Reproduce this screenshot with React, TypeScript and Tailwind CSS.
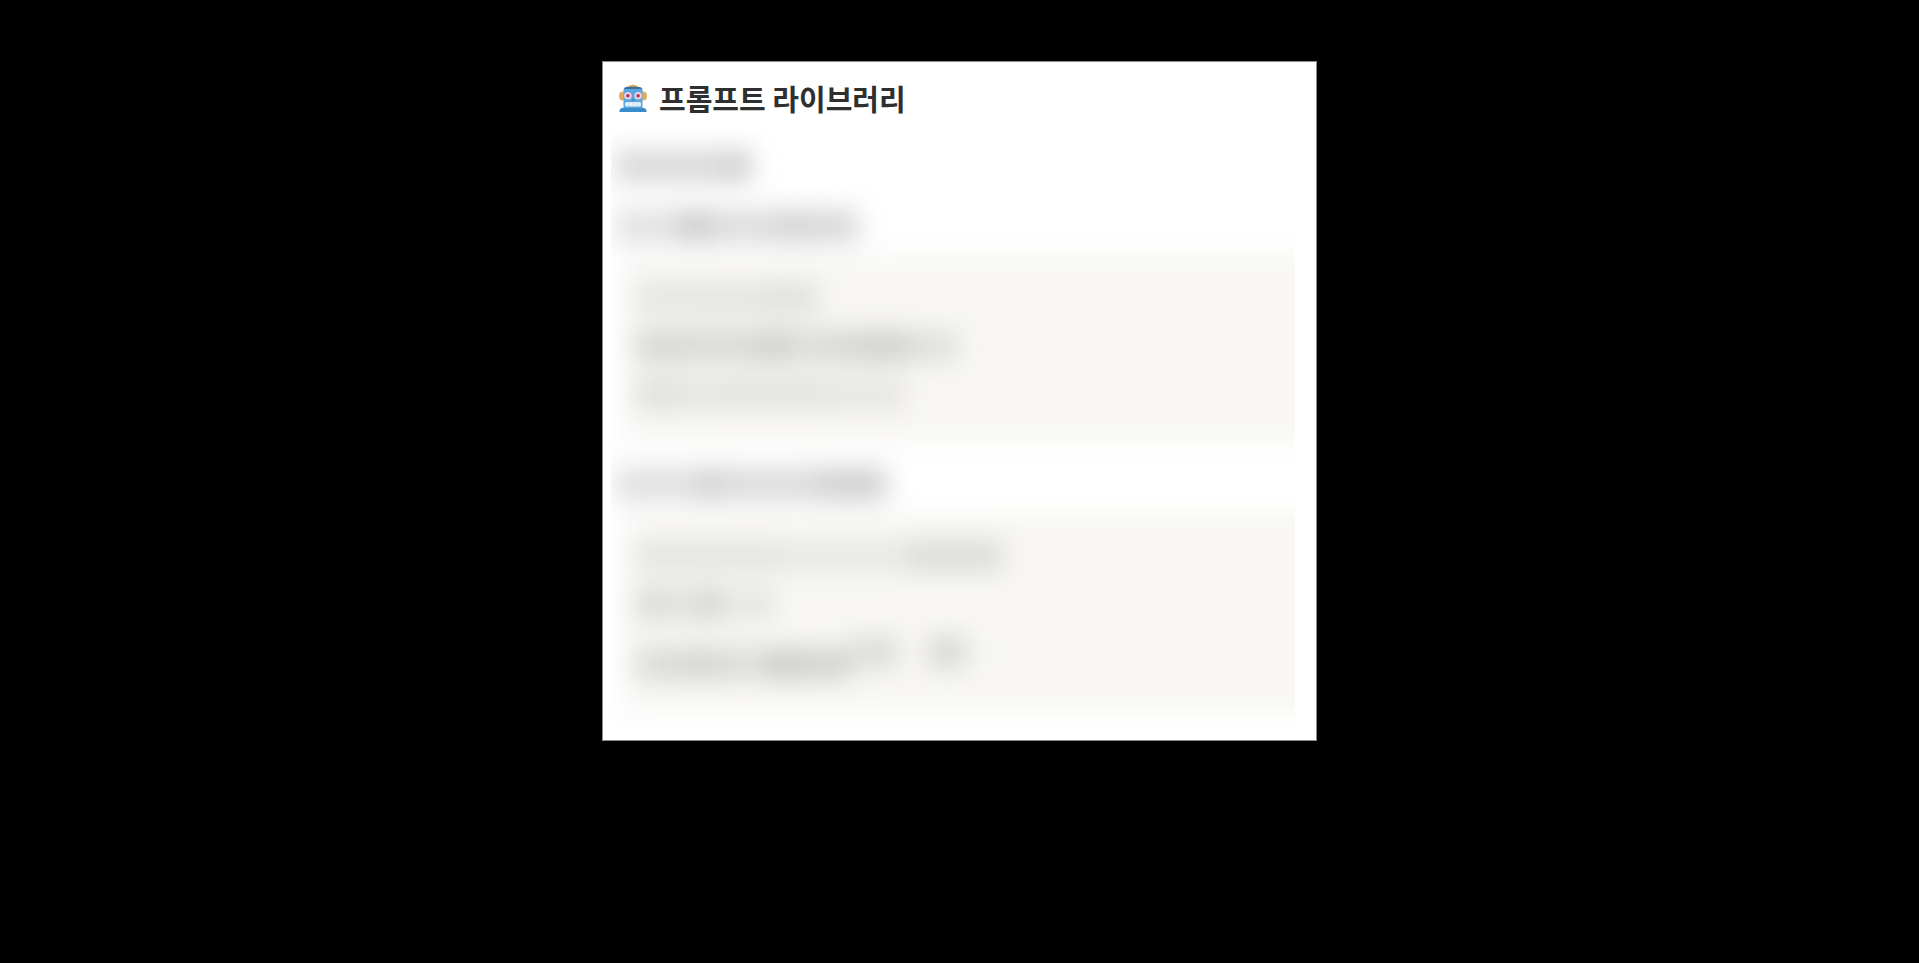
import clsx from 'clsx'

// Each segment is one run of obscured text: width, tone, optional alignment
const FIRST_SECTION = [
  ['w-16 bg-[#e5e5e4]', 'w-16 bg-[#e4e4e3]', 'w-14 bg-[#e0e0df]'],
  ['w-14 bg-[#d6d6d5]', 'w-16 bg-[#d8d8d7]', 'w-10 bg-[#d0d0cf]', 'w-5 bg-[#dededd]', 'w-10 bg-[#d7d7d6]', 'w-14 bg-[#d1d1d0]', 'w-12 bg-[#dfdfde] self-start'],
  ['w-11 bg-[#dfdfde]', 'w-9 bg-[#e5e5e4]', 'w-28 bg-[#e3e3e2]', 'w-20 bg-[#e6e6e5]'],
]

const SECOND_SECTION = [
  ['w-12 bg-[#e4e4e3]', 'w-24 bg-[#e4e4e3]', 'w-32 bg-[#e8e8e7]', 'w-24 bg-[#dcdcdb]'],
  ['w-10 bg-[#dadad9]', 'w-4 bg-[#e6e6e5]', 'w-9 bg-[#d5d5d4]', 'ml-2 w-10 bg-[#e4e4e3] self-start'],
  [
    'w-10 bg-[#dadad9]',
    'w-14 bg-[#d5d5d4]',
    'w-8 bg-[#dededd]',
    'w-10 bg-[#cdcdcc]',
    'w-12 bg-[#d2d2d1]',
    'w-12 bg-[#dcdcdb] self-start',
    'ml-7 w-10 bg-[#d7d7d6] self-start',
  ],
]

function RobotIcon() {
  return (
    <svg viewBox="0 0 28 28" className="h-7 w-7 shrink-0" aria-hidden="true">
      <path d="M7 4Q14-3 21 4Z" fill="#e8b44c" />
      <ellipse cx="3.4" cy="12" rx="3.4" ry="4.6" fill="#e3ad62" />
      <ellipse cx="24.6" cy="12" rx="3.4" ry="4.6" fill="#e3ad62" />
      <path d="M4.5 6Q4.5 3 8 3H20Q23.5 3 23.5 6V25H4.5Z" fill="#58a5df" />
      <path d="M5 4.8Q6 2.6 14 2.6T23 4.8L21 5H7Z" fill="#3c6f9b" />
      <path d="M3 24H25Q27.6 24.4 27.6 28H.4Q.4 24.4 3 24Z" fill="#3a8bcb" />
      <circle cx="8.9" cy="11.8" r="3.8" fill="#efd0e0" />
      <circle cx="19.1" cy="11.8" r="3.8" fill="#efd0e0" />
      <circle cx="8.9" cy="11.8" r="1.8" fill="#b8325c" />
      <circle cx="19.1" cy="11.8" r="1.8" fill="#b8325c" />
      <path d="M12.7 16.8L14 14.4L15.3 16.8Z" fill="#2f80bf" />
      <rect x="6" y="18" width="16" height="4.6" rx="1.5" fill="#e4f0fa" />
      <path d="M10 18V22.6M14 18V22.6M18 18V22.6" stroke="#b9d6ee" strokeWidth="0.6" />
    </svg>
  )
}

function HiddenLine({ segments, tall }: { segments: string[]; tall?: boolean }) {
  return (
    <div className={clsx('flex items-end', tall ? 'h-11' : 'h-8')}>
      {segments.map((segment, i) => (
        <span key={i} className={clsx('h-8', segment)} />
      ))}
    </div>
  )
}

function HiddenBlock({ lines, tallLast }: { lines: string[][]; tallLast?: boolean }) {
  return (
    <div className="mt-3 -mr-10 ml-2 flex flex-col gap-4 bg-[#f8f7f5] pt-7 pr-4 pb-8 pl-3">
      {lines.map((segments, i) => (
        <HiddenLine key={i} segments={segments} tall={tallLast && i === lines.length - 1} />
      ))}
    </div>
  )
}

export default function App() {
  return (
    <main className="min-h-screen bg-black px-4 py-[61px] font-['Noto_Sans_CJK_KR','Noto_Sans',sans-serif]">
      <section className="mx-auto max-w-[715px] border border-[#8a8a8a] bg-white">
        <header className="flex h-[68px] items-center gap-3 px-4 pt-[3px]">
          <RobotIcon />
          <h1 className="text-[29px] leading-8 font-bold text-[#2f2f2f]">프롬프트 라이브러리</h1>
        </header>

        <div className="mr-[21px] mb-3 ml-2 overflow-hidden" aria-hidden="true">
          <div className="pt-5 pb-4 pl-1 blur-[13px]">
            <HiddenLine segments={['w-28 bg-[#d7d7d8]', 'w-6 bg-[#cbcbcd]']} />
            <div className="mt-7">
              <HiddenLine segments={['w-16 bg-[#e0e0e0]', 'w-8 bg-[#cacacb]', 'w-16 bg-[#dbdbdc]', 'w-9 bg-[#d2d2d3]', 'w-12 bg-[#d7d7d8]']} />
            </div>
            <HiddenBlock lines={FIRST_SECTION} />
            <div className="mt-[26px]">
              <HiddenLine segments={['w-16 bg-[#dedede]', 'w-4 bg-[#e0e0e0]', 'w-7 bg-[#cfcfd0]', 'w-24 bg-[#dadadb]', 'w-[68px] bg-[#cfcfd0]']} />
            </div>
            <HiddenBlock lines={SECOND_SECTION} tallLast />
          </div>
        </div>
      </section>
    </main>
  )
}
